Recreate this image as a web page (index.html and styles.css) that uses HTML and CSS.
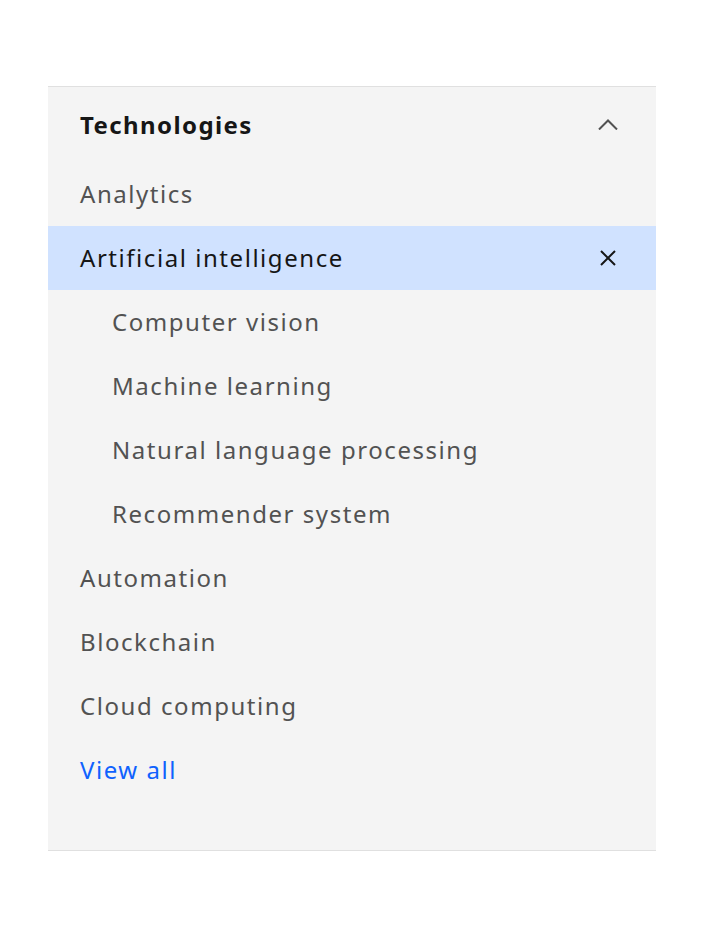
FILE: index.html
```html
<!DOCTYPE html>
<html lang="en">
<head>
<meta charset="utf-8">
<title>Technologies</title>
<link rel="stylesheet" href="styles.css">
</head>
<body>
<nav class="panel">
  <div class="header">
    <span class="title">Technologies</span>
    <svg class="chevron" width="20" height="11" viewBox="0 0 20 11" aria-hidden="true"><path d="M1 10.5 L10 1.5 L19 10.5" fill="none" stroke="#525252" stroke-width="2"/></svg>
  </div>
  <ul class="list">
    <li class="item">Analytics</li>
    <li class="item active"><span>Artificial intelligence</span>
      <svg class="close" width="16" height="16" viewBox="0 0 16 16" aria-hidden="true"><path d="M1 1 L15 15 M15 1 L1 15" fill="none" stroke="#161616" stroke-width="2"/></svg>
    </li>
    <li class="item sub">Computer vision</li>
    <li class="item sub">Machine learning</li>
    <li class="item sub">Natural language processing</li>
    <li class="item sub">Recommender system</li>
    <li class="item">Automation</li>
    <li class="item">Blockchain</li>
    <li class="item">Cloud computing</li>
    <li class="item link">View all</li>
  </ul>
</nav>
</body>
</html>
```
FILE: styles.css
```css
html, body {
  margin: 0;
  padding: 0;
  background: #ffffff;
}
body {
  font-family: "Noto Sans", "Open Sans", sans-serif;
}
.panel {
  margin: 86px 48px 0 48px;
  width: 608px;
  background: #f4f4f4;
  border-top: 1px solid #e0e0e0;
  border-bottom: 1px solid #e0e0e0;
  padding-bottom: 48px;
  box-sizing: content-box;
}
.header {
  height: 75px;
  display: flex;
  align-items: center;
  justify-content: space-between;
  padding: 0 38px 0 32px;
}
.title {
  font-size: 24px;
  font-weight: 700;
  letter-spacing: 1.4px;
  color: #161616;
}
.chevron {
  display: block;
}
.list {
  list-style: none;
  margin: 0;
  padding: 0;
}
.item {
  height: 64px;
  display: flex;
  align-items: center;
  justify-content: space-between;
  padding: 0 40px 0 32px;
  font-size: 24px;
  letter-spacing: 1.55px;
  line-height: 1;
  color: #525252;
}
.item.sub {
  padding-left: 64px;
}
.item.active {
  background: #d0e2ff;
  color: #161616;
}
.close {
  display: block;
}
.item.link {
  color: #0f62fe;
}
```
